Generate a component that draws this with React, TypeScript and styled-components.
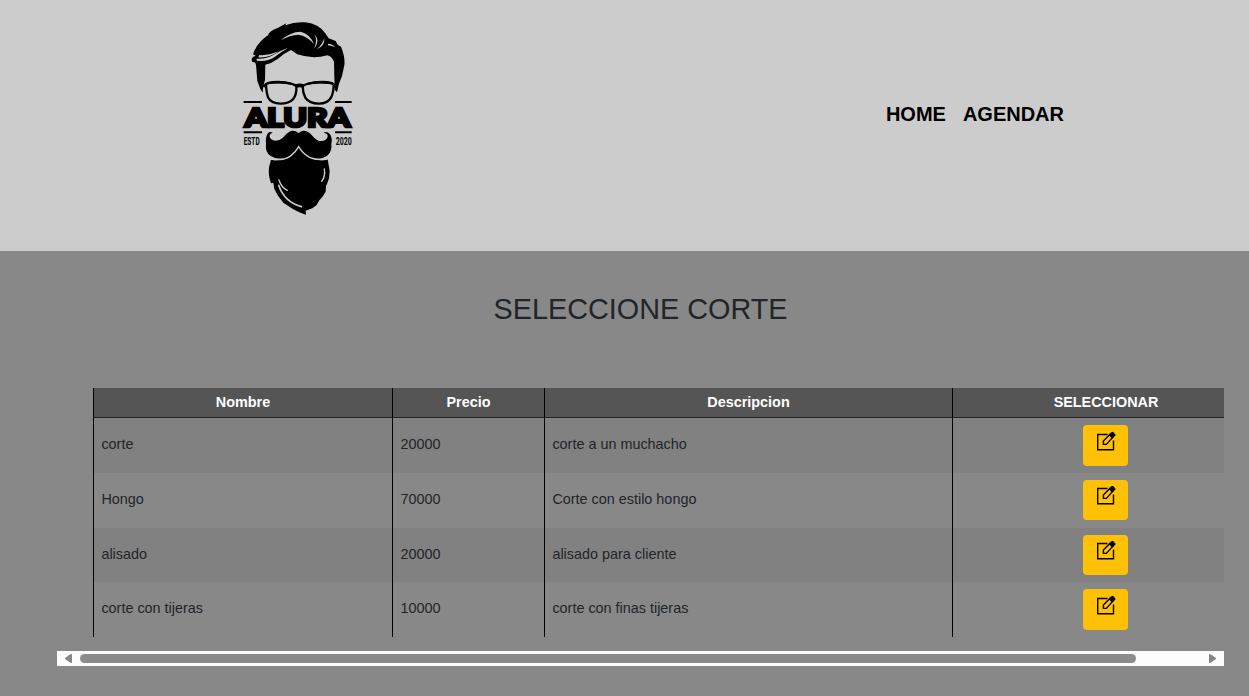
import React from "react";
import styled, { createGlobalStyle } from "styled-components";

const GlobalStyle = createGlobalStyle`
  *, *::before, *::after { box-sizing: border-box; }
  body {
    margin: 0;
    min-height: 100vh;
    background: #888;
    color: #212529;
    font-family: Arial, "Liberation Sans", sans-serif;
    font-size: 14.4px;
    line-height: 1.5;
    overflow: hidden;
  }
`;

const Header = styled.header`
  display: flex;
  justify-content: space-between;
  height: 251px;
  padding: 15px 185px 0 235px;
  background: #ccc;
`;

const LogoSvg = styled.svg`
  display: block;
  width: 125px;
  height: 205px;
`;

const Nav = styled.nav`
  display: flex;
  gap: 17px;
  padding-top: 84px;
`;

const NavLink = styled.a`
  color: #000;
  font-size: 20px;
  font-weight: 700;
  line-height: 30px;
  text-decoration: none;
`;

const Main = styled.main`
  padding: 41px 25px 0 57px;
`;

const Title = styled.h1`
  margin: 0 0 61px;
  font-size: 28.8px;
  font-weight: 400;
  line-height: 35px;
  text-align: center;
`;

const TableWrap = styled.div`
  padding-left: 36px;
  overflow: hidden;
`;

const Table = styled.table`
  width: 1166px;
  table-layout: fixed;
  border-collapse: separate;
  border-spacing: 0;
`;

const Col = styled.col<{ $width: number }>`
  width: ${(p) => p.$width}px;
`;

const HeadCell = styled.th`
  height: 30px;
  padding: 0 7.5px;
  background: #555;
  color: #fff;
  border-left: 1px solid #000;
  border-bottom: 1px solid #212529;
  font-weight: 700;
  line-height: 21px;
  text-align: center;
`;

const Row = styled.tr`
  height: 54.8px;
  &:nth-child(odd) { background: #818181; }
`;

const Cell = styled.td<{ $center?: boolean }>`
  padding: ${(p) => (p.$center ? "7px 9px 7px 7px" : "15.95px 7.4px 0")};
  border-left: 1px solid #000;
  line-height: 21px;
  vertical-align: top;
  text-align: ${(p) => (p.$center ? "center" : "left")};
`;

const EditButton = styled.button`
  display: inline-flex;
  justify-content: center;
  width: 45px;
  height: 40.6px;
  padding: 5.6px 0 0;
  border: 0;
  border-radius: 4px;
  background: #ffc107;
  color: #000;
  vertical-align: top;
`;

const ScrollTrack = styled.div`
  display: flex;
  align-items: center;
  justify-content: space-between;
  height: 15px;
  margin-top: 14px;
  padding: 0 8px;
  background: #fcfcfc;
`;

const ScrollThumb = styled.div`
  width: 1056px;
  height: 9px;
  margin: 0 auto 0 8px;
  border-radius: 5px;
  background: #8b8b8b;
`;

const Arrow = styled.svg`
  display: block;
  width: 7px;
  height: 9px;
  fill: #858585;
`;

const Logo = () => (
  <LogoSvg viewBox="0 0 375 615" role="img" aria-label="Alura">
    {/* hair */}
    <path d="M83 233 L76 222 L67 198 L63 150 L61 143 L51 140 L50 131 L54 126 L62 122 L54 118 Q62 94 78 78 Q90 67 99 61 Q103 47 128 39 L154 25 L151 31 Q181 19 211 22 Q252 27 272 56 L281 70 L302 78 L308 89 L318 95 Q331 126 328 151 L321 183 L312 206 L306 232 L299 224 L297 140 Q290 124 277 121 Q233 134 187 118 L168 105 Q148 114 128 132 Q110 145 91 149 L90 196 L85 210 Z" />
    <g fill="#ccc">
      <path d="M64 131 Q93 133 116 119 Q139 105 160 98 Q139 110 120 125 Q94 142 66 137Z" />
      <path d="M73 120 Q95 123 130 109 Q106 129 70 127Z" />
      <path d="M137 76 Q167 50 197 50 Q227 58 237 88 Q217 62 190 59 Q166 60 137 76Z" />
      <path d="M239 58 Q257 80 237 101 Q248 79 239 58Z M268 69 Q270 94 245 103 Q262 89 268 69Z M279 86 Q292 86 301 97 Q291 93 279 91Z" />
    </g>
    {/* glasses */}
    <g fill="none" stroke="#000" strokeWidth="7">
      <path d="M93 207 Q98 202 132 202 Q171 202 184 213 Q186 238 174 253 Q162 266 137 266 Q108 266 99 247 Q94 232 93 207Z" />
      <path d="M203 213 Q219 202 253 202 Q288 202 296 208 Q296 234 288 248 Q278 266 252 266 Q222 266 211 248 Q203 233 203 213Z" />
      <path d="M182 214 Q194 208 205 214" strokeWidth="11" />
      <path d="M96 205 Q132 196 170 207 M217 207 Q257 196 294 205" strokeWidth="7" />
      <path d="M84 211 L96 213 M294 213 L305 211" strokeWidth="10" />
    </g>
    {/* rules beside the name */}
    <path d="M26 258h55v6h-55z M300 258h50v6h-50z M26 349h55v6h-55z M300 349h50v6h-50z" />
    <text x="29" y="335" textLength="317" lengthAdjust="spacingAndGlyphs" fontFamily="Lato, sans-serif" fontSize="80" fontWeight="900" stroke="#000" strokeWidth="8">ALURA</text>
    <text x="26" y="389" textLength="48" lengthAdjust="spacingAndGlyphs" fontFamily="Roboto, sans-serif" fontSize="32" fontWeight="700">ESTD</text>
    <text x="302" y="389" textLength="48" lengthAdjust="spacingAndGlyphs" fontFamily="Roboto, sans-serif" fontSize="32" fontWeight="700">2020</text>
    {/* moustache */}
    <path d="M191 354 Q181 346 171 347 Q158 350 143 369 Q130 380 114 376 Q102 370 104 360 Q107 353 114 354 Q100 345 94 365 Q91 375 93 389 Q90 412 107 423 Q125 435 153 429 Q177 420 191 397 Q205 420 228 429 Q260 436 278 421 Q292 408 289 387 Q293 370 285 358 Q276 347 266 353 Q279 354 278 365 Q273 379 256 378 Q244 377 232 362 Q218 346 205 347 Q197 348 191 354Z" />
    {/* beard */}
    <path d="M191 395 Q209 422 237 432 Q260 439 278 433 L284 468 L282 490 L276 507 L273 512 L272 530 L262 546 L253 556 L245 570 L232 580 L212 587 L213 599 Q183 590 160 573 L145 563 L129 542 L118 522 L115 503 L108 505 Q99 480 102 457 L108 434 Q135 439 158 429 Q181 418 191 395Z" />
    <g fill="none" stroke="#ccc" strokeLinecap="round">
      <path d="M132 495 Q139 518 157 526" strokeWidth="4" />
      <path d="M131 511 Q148 561 199 575" strokeWidth="5" />
      <path d="M268 462 Q272 484 260 499" strokeWidth="4" />
      <path d="M108 432 Q142 438 165 424 Q182 412 191 395 Q205 419 228 429 Q253 437 276 432" strokeWidth="4" />
    </g>
  </LogoSvg>
);

const PencilSquare = () => (
  <svg width="21" height="21" viewBox="0 0 21 21" fill="none" stroke="currentColor" strokeWidth="1.4">
    <path d="M12.5 3.5H2.7V18.7H18.5V9.5" />
    <path d="M8.4 13.4V10L15 3.2L17.9 6.1L11.4 13.4Z" />
    <path d="M13.6 4.1L16.5 1.2Q17.4.5 18.2 1.2L20.2 3.2Q20.9 4 20.2 4.8L17.3 7.7Z" fill="currentColor" stroke="none" />
  </svg>
);

const cuts = [
  { name: "corte", price: 20000, description: "corte a un muchacho" },
  { name: "Hongo", price: 70000, description: "Corte con estilo hongo" },
  { name: "alisado", price: 20000, description: "alisado para cliente" },
  { name: "corte con tijeras", price: 10000, description: "corte con finas tijeras" },
];

export default function App() {
  return (
    <>
      <GlobalStyle />
      <Header>
        <Logo />
        <Nav>
          <NavLink>HOME</NavLink>
          <NavLink>AGENDAR</NavLink>
        </Nav>
      </Header>
      <Main>
        <Title>SELECCIONE CORTE</Title>
        <TableWrap>
          <Table>
            <colgroup>
              <Col $width={299} />
              <Col $width={152} />
              <Col $width={408} />
              <Col $width={307} />
            </colgroup>
            <thead>
              <tr>
                <HeadCell>Nombre</HeadCell>
                <HeadCell>Precio</HeadCell>
                <HeadCell>Descripcion</HeadCell>
                <HeadCell>SELECCIONAR</HeadCell>
              </tr>
            </thead>
            <tbody>
              {cuts.map((cut) => (
                <Row key={cut.name}>
                  <Cell>{cut.name}</Cell>
                  <Cell>{cut.price}</Cell>
                  <Cell>{cut.description}</Cell>
                  <Cell $center>
                    <EditButton aria-label="Seleccionar">
                      <PencilSquare />
                    </EditButton>
                  </Cell>
                </Row>
              ))}
            </tbody>
          </Table>
        </TableWrap>
        <ScrollTrack>
          <Arrow viewBox="0 0 7 9"><path d="M7 0V9L5 8.5L0 5V4L5 .5Z" /></Arrow>
          <ScrollThumb />
          <Arrow viewBox="0 0 7 9"><path d="M0 0V9L2 8.5L7 5V4L2 .5Z" /></Arrow>
        </ScrollTrack>
      </Main>
    </>
  );
}
